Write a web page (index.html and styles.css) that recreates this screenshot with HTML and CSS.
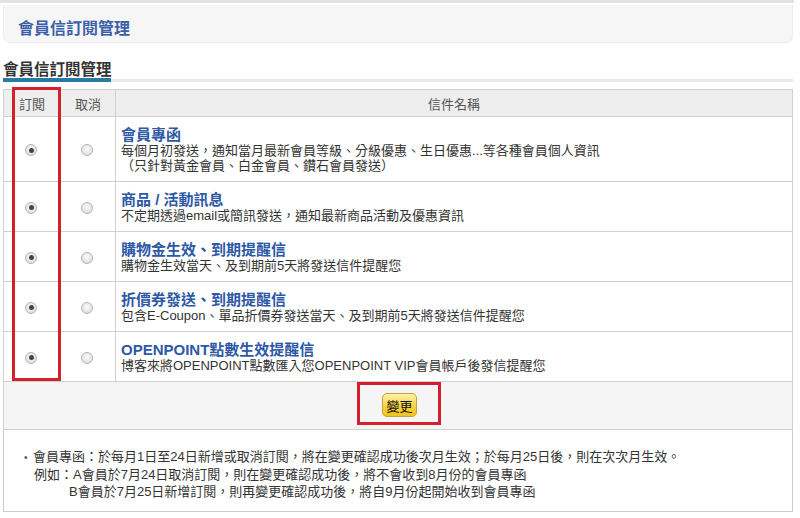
FILE: index.html
```html
<!DOCTYPE html>
<html lang="zh-Hant">
<head>
<meta charset="utf-8">
<link rel="stylesheet" href="styles.css">
</head>
<body>
<div class="page">
  <div class="topline"></div>
  <div class="banner"><span class="banner-title">會員信訂閱管理</span></div>
  <div class="section-head">
    <h2 class="section-title">會員信訂閱管理</h2>
    <div class="section-rule"><span class="rule-blue"></span><span class="rule-gray"></span></div>
  </div>
  <div class="table-wrap">
    <table class="sub-table">
      <thead>
        <tr class="head-row">
          <th class="col-sub">訂閱</th>
          <th class="col-cancel">取消</th>
          <th class="col-name">信件名稱</th>
        </tr>
      </thead>
      <tbody>
        <tr class="row row-tall">
          <td class="radio-cell"><span class="radio checked"></span></td>
          <td class="radio-cell"><span class="radio"></span></td>
          <td class="name-cell">
            <div class="mail-title">會員專函</div>
            <div class="mail-desc">每個月初發送，通知當月最新會員等級、分級優惠、生日優惠...等各種會員個人資訊</div>
            <div class="mail-desc">（只針對黃金會員、白金會員、鑽石會員發送）</div>
          </td>
        </tr>
        <tr class="row">
          <td class="radio-cell"><span class="radio checked"></span></td>
          <td class="radio-cell"><span class="radio"></span></td>
          <td class="name-cell">
            <div class="mail-title">商品 / 活動訊息</div>
            <div class="mail-desc">不定期透過email或簡訊發送，通知最新商品活動及優惠資訊</div>
          </td>
        </tr>
        <tr class="row">
          <td class="radio-cell"><span class="radio checked"></span></td>
          <td class="radio-cell"><span class="radio"></span></td>
          <td class="name-cell">
            <div class="mail-title">購物金生效、到期提醒信</div>
            <div class="mail-desc">購物金生效當天、及到期前5天將發送信件提醒您</div>
          </td>
        </tr>
        <tr class="row">
          <td class="radio-cell"><span class="radio checked"></span></td>
          <td class="radio-cell"><span class="radio"></span></td>
          <td class="name-cell">
            <div class="mail-title">折價券發送、到期提醒信</div>
            <div class="mail-desc">包含E-Coupon、單品折價券發送當天、及到期前5天將發送信件提醒您</div>
          </td>
        </tr>
        <tr class="row">
          <td class="radio-cell"><span class="radio checked"></span></td>
          <td class="radio-cell"><span class="radio"></span></td>
          <td class="name-cell">
            <div class="mail-title">OPENPOINT點數生效提醒信</div>
            <div class="mail-desc">博客來將OPENPOINT點數匯入您OPENPOINT VIP會員帳戶後發信提醒您</div>
          </td>
        </tr>
        <tr class="btn-row">
          <td colspan="3" class="btn-cell">
            <span class="btn-mark"><button class="btn-change" type="button">變更</button></span>
          </td>
        </tr>
      </tbody>
    </table>
    <div class="mark-col"></div>
  </div>
  <div class="notes">
    <p class="note-line"><span class="dot">•</span>會員專函：於每月1日至24日新增或取消訂閱，將在變更確認成功後次月生效；於每月25日後，則在次次月生效。</p>
    <p class="note-line note-ex">例如：A會員於7月24日取消訂閱，則在變更確認成功後，將不會收到8月份的會員專函</p>
    <p class="note-line note-ex2">B會員於7月25日新增訂閱，則再變更確認成功後，將自9月份起開始收到會員專函</p>
  </div>
</div>
</body>
</html>
```
FILE: styles.css
```css
* { box-sizing: border-box; }
html, body { margin: 0; padding: 0; background: #fff; }
body {
  font-family: "Liberation Sans", "Noto Sans CJK TC", sans-serif;
  color: #333;
  font-size: 13px;
}
.page { width: 800px; }
.topline { height: 3px; background: #e3e3e3; width: 794px; }
.banner {
  margin: 2px 7px 0 3px;
  height: 38px;
  background: #f6f6f6;
  border: 1px solid #ececec;
  border-top: none;
  border-radius: 0 0 7px 7px;
  padding: 14px 0 0 14px;
}
.banner-title {
  font-size: 16px;
  font-weight: bold;
  color: #3c60a8;
  line-height: 20px;
}
.section-head { margin: 19px 7px 0 3px; }
.section-title {
  margin: 0;
  font-size: 15.5px;
  font-weight: bold;
  color: #333;
  line-height: 16px;
  height: 16px;
}
.section-rule { display: flex; align-items: flex-end; height: 4px; }
.rule-blue { width: 108px; height: 4px; background: #2a7aa6; }
.rule-gray { flex: 1; height: 3px; background: #e8e8e8; }
.table-wrap { position: relative; margin: 7px 7px 0 3px; }
.sub-table {
  width: 100%;
  border-collapse: collapse;
  border: 1px solid #cccccc;
}
.sub-table th, .sub-table td { border: 1px solid #d0d0d0; padding: 0; }
.head-row { height: 27px; background: #eeeeee; }
.head-row th { font-weight: normal; color: #555; font-size: 13px; }
.col-sub { width: 57px; }
.col-cancel { width: 55px; }
.row { height: 50px; }
.row-tall { height: 65px; }
.radio-cell { text-align: center; vertical-align: middle; }
.radio {
  display: inline-block;
  width: 12px; height: 12px;
  border-radius: 50%;
  border: 1px solid #b5b5b5;
  background: radial-gradient(circle at 50% 40%, #fafafa 0%, #e6e6e6 60%, #d4d4d4 100%);
  vertical-align: middle;
  position: relative;
  left: -1px;
}
.radio.checked::after {
  content: "";
  position: absolute;
  left: 2.5px; top: 2.5px;
  width: 5px; height: 5px;
  border-radius: 50%;
  background: #444;
}
.name-cell { padding: 0 0 0 5px !important; vertical-align: middle; }
.mail-title {
  font-size: 15px;
  font-weight: bold;
  color: #2d58a6;
  line-height: 17px;
}
.mail-desc { font-size: 13px; color: #333; line-height: 15px; }
.btn-row { height: 48px; background: #f5f5f5; }
.btn-cell { text-align: center; vertical-align: middle; }
.btn-mark {
  display: inline-block;
  position: relative;
  left: 1px;
  top: -2px;
  padding: 8px 21px 5px 22px;
  border: 3px solid #d4202c;
}
.btn-change {
  font-family: "Liberation Sans", "Noto Sans CJK TC", sans-serif;
  font-size: 13px;
  color: #111;
  width: 35px; height: 24px;
  padding: 0;
  border: 1px solid #c8a23c;
  border-radius: 5px;
  background: linear-gradient(#fff2a8, #f7d23a 60%, #f0c21c);
  display: block;
}
.mark-col {
  position: absolute;
  left: 9px; top: -2px;
  width: 49px; height: 294px;
  border: 3px solid #d4202c;
}
.notes {
  margin: 0 7px 0 3px;
  border: 1px solid #cccccc;
  border-top: none;
  height: 82px;
  padding: 18px 0 0 20px;
}
.note-line { margin: 0; font-size: 13px; line-height: 17px; color: #333; white-space: nowrap; }
.dot { display: inline-block; width: 9px; font-size: 10px; color: #555; }
.note-ex { padding-left: 10px; }
.note-ex2 { padding-left: 45px; }
```
